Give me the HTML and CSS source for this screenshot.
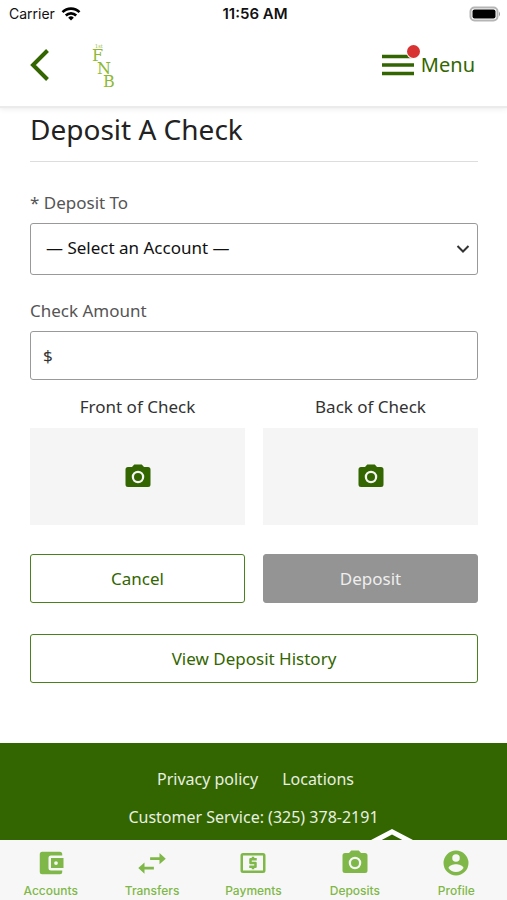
FILE: index.html
```html
<!DOCTYPE html>
<html lang="en">
<head>
<meta charset="utf-8">
<meta name="viewport" content="width=device-width, initial-scale=1">
<title>Deposit A Check</title>
<link rel="stylesheet" href="styles.css">
</head>
<body>
<svg hidden>
  <symbol id="camera" viewBox="0 0 24 24">
    <path fill-rule="evenodd" d="M9 2 7.200 4H4a2 2 0 0 0-2 2v12a2 2 0 0 0 2 2h16a2 2 0 0 0 2-2V6a2 2 0 0 0-2-2h-3.200L15 2H9zm3 15a5 5 0 1 1 0-10 5 5 0 0 1 0 10z"/>
    <circle cx="12" cy="12" r="3.200"/>
  </symbol>
</svg>

<div class="status">
  <div class="status-carrier">
    <span>Carrier</span>
    <svg width="20" height="14" viewBox="0 0 20 14" fill="none" stroke="#000" stroke-width="2.600" aria-hidden="true">
      <path d="M1.500 5.200a12 12 0 0 1 17 0"/>
      <path d="M4.800 8.500a7.400 7.400 0 0 1 10.400 0"/>
      <path d="M10 13.500 7.200 10.700a4 4 0 0 1 5.600 0z" fill="#000" stroke="none"/>
    </svg>
  </div>
  <div class="status-time">11:56 AM</div>
  <div class="status-battery">
    <svg width="32" height="16" viewBox="0 0 32 16" aria-hidden="true">
      <rect x="1.500" y="1.500" width="27" height="13" rx="4" fill="#fff" stroke="#b5b5b5" stroke-width="2"/>
      <rect x="3.500" y="3.500" width="23" height="9" rx="2" fill="#000"/>
      <path d="M30 5.500q2 2.500 0 5z" fill="#999"/>
    </svg>
  </div>
</div>

<header class="header">
  <button class="back" type="button" aria-label="Back">
    <svg width="20" height="32" viewBox="0 0 20 32" fill="none" stroke="#360" stroke-width="4"><path d="M17.500 1.500 3 16l14.500 14.500"/></svg>
  </button>
  <svg class="logo" width="30" height="52" viewBox="0 0 30 52" role="img" aria-label="FNB">
    <text class="logo-small" x="4" y="9">1st</text>
    <text x="1" y="22">F</text>
    <text x="6" y="35">N</text>
    <text x="12" y="48">B</text>
  </svg>
  <button class="menu" type="button">
    <span class="menu-icon">
      <svg width="32" height="22" viewBox="0 0 32 22" stroke="#360" stroke-width="3.400"><path d="M0 2.500h32M0 11h32M0 19.500h32"/></svg>
      <span class="menu-dot"></span>
    </span>
    <span>Menu</span>
  </button>
</header>

<div class="scroll">
  <main class="content">
    <h1>Deposit A Check</h1>
    <form>
      <label for="account">* Deposit To</label>
      <div class="select-wrap">
        <select id="account"><option>— Select an Account —</option></select>
        <svg class="chevron" width="14" height="8" viewBox="0 0 14 8" fill="none" stroke="#333" stroke-width="2" aria-hidden="true"><path d="m1.500 1 5.500 5.500L12.500 1"/></svg>
      </div>

      <label for="amount">Check Amount</label>
      <div class="amount">
        <span>$</span>
        <input id="amount" type="text" inputmode="decimal">
      </div>

      <div class="pair captures">
        <div class="capture">
          <span id="front">Front of Check</span>
          <button type="button" aria-labelledby="front"><svg width="30" height="30" fill="#360"><use href="#camera"/></svg></button>
        </div>
        <div class="capture">
          <span id="back">Back of Check</span>
          <button type="button" aria-labelledby="back"><svg width="30" height="30" fill="#360"><use href="#camera"/></svg></button>
        </div>
      </div>

      <div class="pair actions">
        <button class="btn" type="button">Cancel</button>
        <button class="btn btn-disabled" type="submit" disabled>Deposit</button>
      </div>
      <button class="btn btn-wide" type="button">View Deposit History</button>
    </form>
  </main>

  <footer class="footer">
    <nav class="footer-links">
      <a href="#privacy">Privacy policy</a>
      <a href="#locations">Locations</a>
    </nav>
    <p>Customer Service: (325) 378-2191</p>
    <div class="housing">
      <svg width="42" height="32" viewBox="0 0 42 32" role="img" aria-label="Equal Housing Lender">
        <path fill="#fff" fill-rule="evenodd" d="M21 0 42 11v6h-3v15H3V17H0v-6zM21 5.500 7 13v15h28V13z"/>
        <path fill="#fff" d="M14 14h14v4H14zm0 7h14v4H14z"/>
      </svg>
    </div>
  </footer>
</div>

<nav class="tabs">
  <a href="#accounts">
    <svg width="30" height="30" viewBox="0 0 24 24" fill="#7fb848"><path d="M21 18v1a2 2 0 0 1-2 2H5a2 2 0 0 1-2-2V5a2 2 0 0 1 2-2h14a2 2 0 0 1 2 2v1h-9a2 2 0 0 0-2 2v8a2 2 0 0 0 2 2z"/><path fill-rule="evenodd" d="M12 16h10V8H12zm4-2.500a1.500 1.500 0 1 1 0-3 1.500 1.500 0 0 1 0 3z"/></svg>
    <span>Accounts</span>
  </a>
  <a href="#transfers">
    <svg width="30" height="30" viewBox="0 0 24 24" fill="#7fb848"><path d="M23 8.500 18 4v3.400h-7.500v2.200H18V13zM1 16l5 4.500v-3.400h7.500v-2.200H6v-3.400z"/></svg>
    <span>Transfers</span>
  </a>
  <a href="#payments">
    <svg width="30" height="30" viewBox="0 0 24 24" fill="#7fb848"><path d="M11 17h2v-1h1a1 1 0 0 0 1-1v-3a1 1 0 0 0-1-1h-3v-1h4V8h-2V7h-2v1h-1a1 1 0 0 0-1 1v3a1 1 0 0 0 1 1h3v1H9v2h2z"/><path fill-rule="evenodd" d="M20 4H4a2 2 0 0 0-2 2v12a2 2 0 0 0 2 2h16a2 2 0 0 0 2-2V6a2 2 0 0 0-2-2zm0 14H4V6h16z"/></svg>
    <span>Payments</span>
  </a>
  <a href="#deposits">
    <svg width="30" height="30" fill="#7fb848"><use href="#camera"/></svg>
    <span>Deposits</span>
  </a>
  <a href="#profile">
    <svg width="30" height="30" viewBox="0 0 24 24" fill="#7fb848"><path fill-rule="evenodd" d="M12 2a10 10 0 1 0 0 20 10 10 0 0 0 0-20zm0 3a3 3 0 1 1 0 6 3 3 0 0 1 0-6zm0 14.200a7.200 7.200 0 0 1-6-3.220c.03-1.990 4-3.080 6-3.080s5.970 1.090 6 3.080a7.200 7.200 0 0 1-6 3.220z"/></svg>
    <span>Profile</span>
  </a>
</nav>
</body>
</html>
```

FILE: styles.css
```css
* {
  box-sizing: border-box;
}

body {
  margin: 0;
  height: 100vh;
  display: flex;
  flex-direction: column;
  background: #fff;
  color: #333;
  font-family: "Noto Sans", sans-serif;
  font-size: 17px;
  line-height: 24px;
}

button,
input,
select {
  font: inherit;
  color: inherit;
}

button {
  padding: 0;
  border: 0;
  background: none;
  cursor: pointer;
}

svg {
  display: block;
}

svg[hidden] {
  display: none;
}

.status {
  display: grid;
  grid-template-columns: 1fr auto 1fr;
  align-items: center;
  flex: none;
  height: 28px;
  padding: 0 6px 0 9px;
  position: relative;
  z-index: 2;
  background: #fff;
  color: #111;
  font-family: Inter, sans-serif;
  font-size: 14px;
}

.status-carrier {
  display: flex;
  align-items: center;
  gap: 6px;
}

.status-time {
  font-size: 15px;
  font-weight: 600;
}

.status-battery {
  justify-self: end;
}

.header {
  display: flex;
  align-items: center;
  flex: none;
  height: 78px;
  padding: 0 32px 4px 30px;
  position: relative;
  z-index: 1;
  background: #fff;
  box-shadow: 0 2px 1px #ebebeb, 0 3px 6px rgba(0, 0, 0, 0.08);
}

.logo {
  margin-left: 41px;
  fill: #8fb832;
  font-family: "DejaVu Serif", serif;
  font-size: 16px;
}

.logo-small {
  font-size: 5px;
}

.menu {
  display: flex;
  align-items: center;
  gap: 7px;
  margin-left: auto;
  color: #360;
  font-size: 20px;
}

.menu-icon {
  position: relative;
}

.menu-dot {
  position: absolute;
  top: -9px;
  right: -6px;
  width: 13px;
  height: 13px;
  border-radius: 50%;
  background: #d93232;
  box-shadow: 0 0 0 1px #fff;
}

.scroll {
  flex: 1;
  min-height: 0;
  overflow-y: auto;
  scrollbar-width: none;
}

.content {
  padding: 3px 29px 60px 30px;
}

h1 {
  margin: 0 0 29px;
  padding-bottom: 12px;
  border-bottom: 1px solid #ddd;
  color: #222;
  font-size: 28px;
  font-weight: 400;
  line-height: 40px;
}

label {
  display: block;
  margin-bottom: 8px;
  color: #555;
}

.select-wrap {
  position: relative;
  margin-bottom: 24px;
}

select {
  display: block;
  width: 100%;
  height: 52px;
  padding: 0 40px 2px 15px;
  border: 1px solid #999;
  border-radius: 3px;
  background: #fff;
  color: #111;
  appearance: none;
}

.chevron {
  position: absolute;
  top: 22px;
  right: 8px;
  pointer-events: none;
}

.amount {
  display: flex;
  align-items: center;
  height: 49px;
  padding: 0 12px;
  border: 1px solid #999;
  border-radius: 3px;
}

.amount input {
  flex: 1;
  min-width: 0;
  border: 0;
  outline: 0;
  background: none;
}

.pair {
  display: grid;
  grid-template-columns: 1fr 1fr;
  gap: 18px;
}

.captures {
  margin: 15px 0 29px;
}

.capture {
  display: flex;
  flex-direction: column;
  gap: 9px;
  text-align: center;
}

.capture button {
  display: flex;
  align-items: center;
  justify-content: center;
  height: 97px;
  background: #f5f5f5;
}

.btn {
  height: 49px;
  border: 1px solid #4a8020;
  border-radius: 3px;
  color: #360;
}

.btn-disabled {
  border-color: #949494;
  background: #949494;
  color: #eee;
}

.btn-wide {
  width: 100%;
  margin-top: 31px;
}

.footer {
  padding: 24px 0;
  background: #360;
  color: #e8f0e0;
  font-size: 16px;
  text-align: center;
}

.footer-links {
  display: flex;
  justify-content: center;
  gap: 24px;
  padding-left: 4px;
}

.footer a {
  color: inherit;
  text-decoration: none;
}

.footer p {
  margin: 14px 0 0;
}

.housing {
  display: flex;
  justify-content: flex-end;
  padding-right: 94px;
}

.tabs {
  display: grid;
  grid-template-columns: repeat(5, 1fr);
  flex: none;
  height: 60px;
  padding-top: 8px;
  background: #f7f7f7;
}

.tabs a {
  display: flex;
  flex-direction: column;
  align-items: center;
  gap: 5px;
  color: #7fb848;
  font-family: Inter, sans-serif;
  font-size: 12px;
  font-weight: 500;
  line-height: 16px;
  text-decoration: none;
}
```
